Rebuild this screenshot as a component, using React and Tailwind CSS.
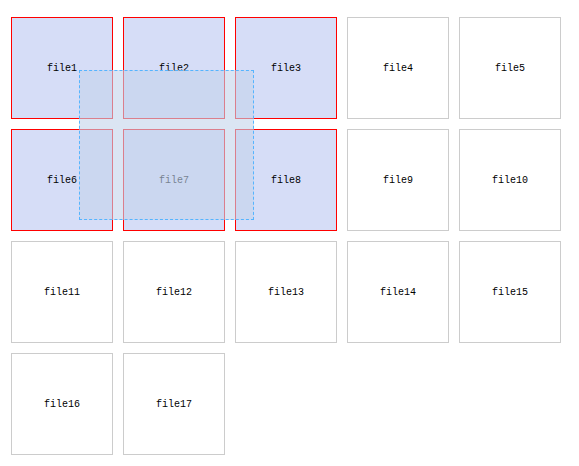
import React from 'react';

const files = Array.from({ length: 17 }, (_, i) => ({
  id: i + 1,
  name: `file${i + 1}`,
  selected: [1, 2, 3, 6, 7, 8].includes(i + 1),
}));

const App = () => {
  return (
    <div className="relative w-[579px] h-[466px] bg-white font-['Liberation_Mono',monospace] text-[10px] text-black">
      {/* File grid */}
      <div className="grid grid-cols-[repeat(5,102px)] gap-[10px] pl-[11px] pt-[17px]">
        {files.map((file) => (
          <div
            key={file.id}
            className={`w-[102px] h-[102px] flex items-center justify-center border ${
              file.selected ? 'border-[#ff0000] bg-[#d6ddf7]' : 'border-[#cccccc] bg-white'
            }`}
          >
            {file.name}
          </div>
        ))}
      </div>

      {/* Drag selection box */}
      <div className="absolute left-[79px] top-[70px] w-[175px] h-[150px] border border-dashed border-[#55b4ff] bg-[rgba(195,212,235,0.6)]" />
    </div>
  );
};

export default App;
